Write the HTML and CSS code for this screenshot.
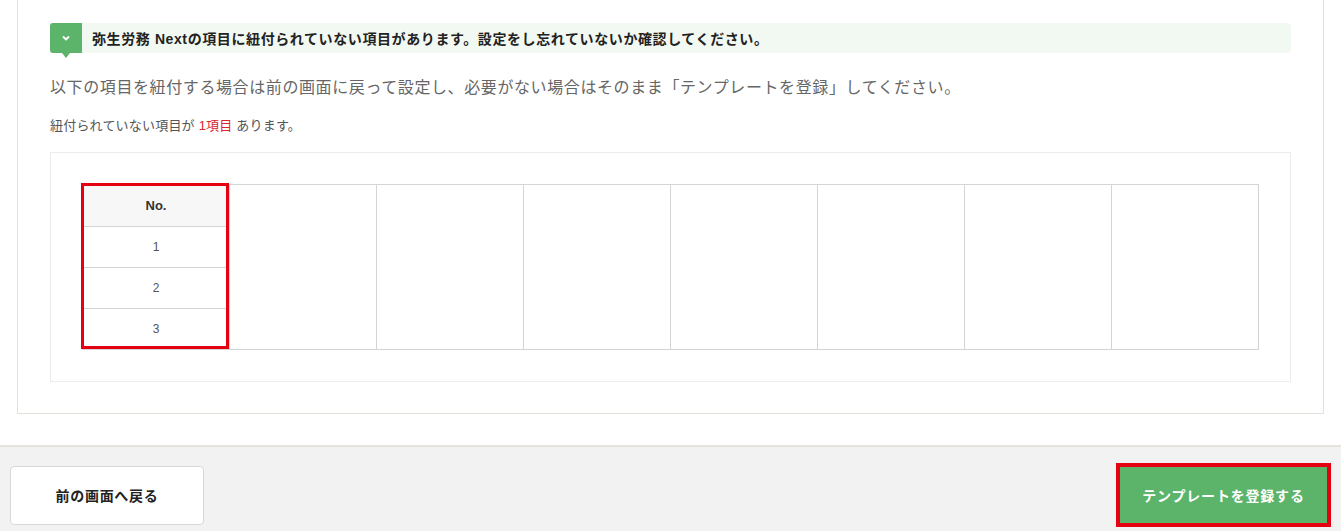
FILE: index.html
```html
<!DOCTYPE html>
<html lang="ja">
<head>
    <meta charset="UTF-8">
    <title>テンプレート登録</title>
    <link rel="stylesheet" href="styles.css">
</head>
<body>

<div class="panel">
    <div class="notice">
        <div class="notice-badge">
            <svg width="10" height="7" viewBox="0 0 10 7"><path d="M2 1.5 L5 4.5 L8 1.5" fill="none" stroke="#fff" stroke-width="1.8"/></svg>
        </div>
        <p class="notice-text">弥生労務 Nextの項目に紐付られていない項目があります。設定をし忘れていないか確認してください。</p>
    </div>

    <p class="lead">以下の項目を紐付する場合は前の画面に戻って設定し、必要がない場合はそのまま「テンプレートを登録」してください。</p>
    <p class="count">紐付られていない項目が <span class="count-num">1項目</span> あります。</p>

    <div class="table-box">
        <div class="table-wrap">
            <table class="items">
                <tr>
                    <th>No.</th>
                    <td class="blank" rowspan="4"></td>
                    <td class="blank" rowspan="4"></td>
                    <td class="blank" rowspan="4"></td>
                    <td class="blank" rowspan="4"></td>
                    <td class="blank" rowspan="4"></td>
                    <td class="blank" rowspan="4"></td>
                    <td class="blank" rowspan="4"></td>
                </tr>
                <tr><td>1</td></tr>
                <tr><td>2</td></tr>
                <tr><td>3</td></tr>
            </table>
            <div class="mark mark-col"></div>
        </div>
    </div>
</div>

<div class="footer">
    <button class="btn-back">前の画面へ戻る</button>
    <div class="mark-btn">
        <button class="btn-submit">テンプレートを登録する</button>
    </div>
</div>

</body>
</html>
```

FILE: styles.css
```css
body {
    margin: 0;
    background-color: #fff;
    font-family: "Liberation Sans", "Noto Sans CJK JP", sans-serif;
    color: #333;
}
p {
    margin: 0;
}
.panel {
    margin: 0 17px 31px;
    padding: 23px 32px 31px;
    border: 1px solid #e4e0da;
    border-top: none;
}
.notice {
    display: flex;
    align-items: center;
    height: 30px;
    background-color: #f2f9f2;
    border-radius: 4px;
}
.notice-badge {
    position: relative;
    width: 32px;
    height: 30px;
    background-color: #5cb46a;
    border-radius: 3px 0 0 3px;
    display: flex;
    align-items: center;
    justify-content: center;
}
.notice-badge::after {
    content: "";
    position: absolute;
    left: 12px;
    bottom: -5px;
    border-left: 4px solid transparent;
    border-right: 4px solid transparent;
    border-top: 5px solid #5cb46a;
}
.notice-text {
    margin-left: 10px;
    font-size: 14px;
    letter-spacing: 0.6px;
    font-weight: bold;
    color: #222;
}
.lead {
    margin-top: 24px;
    font-size: 16px;
    letter-spacing: 0.6px;
    color: #666;
    line-height: 22px;
}
.count {
    margin-top: 19px;
    font-size: 13px;
    letter-spacing: 0.2px;
    color: #555;
    line-height: 16px;
}
.count-num {
    color: #d9262c;
}
.table-box {
    margin-top: 18px;
    padding: 31px;
    border: 1px solid #ececec;
}
.table-wrap {
    position: relative;
}
.items {
    width: 100%;
    border-collapse: collapse;
    table-layout: fixed;
    font-size: 12px;
    color: #555;
}
.items th, .items td {
    border: 1px solid #d4d4d4;
    text-align: center;
    padding: 0;
    height: 40px;
}
.items th {
    height: 41px;
    background-color: #f7f7f7;
    font-weight: bold;
    font-size: 13px;
    color: #333;
}
.items td.blank {
    height: auto;
}
.mark {
    position: absolute;
    border: 3px solid #e50012;
}
.mark-col {
    left: -1px;
    top: -1px;
    width: 142px;
    height: 160px;
}
.footer {
    display: flex;
    justify-content: space-between;
    align-items: center;
    height: 72px;
    padding: 12px 10px 0;
    background-color: #f2f2f2;
    border-top: 2px solid #e6e3de;
}
.btn-back {
    width: 194px;
    height: 59px;
    background-color: #fff;
    border: 1px solid #d8d8d8;
    border-radius: 4px;
    font-family: inherit;
    font-size: 14px;
    letter-spacing: 0.7px;
    font-weight: bold;
    color: #222;
    cursor: pointer;
}
.mark-btn {
    border: 4px solid #e50012;
}
.btn-submit {
    display: block;
    width: 207px;
    height: 56px;
    background-color: #5cb46a;
    border: none;
    font-family: inherit;
    font-size: 14px;
    letter-spacing: 0.8px;
    font-weight: bold;
    color: #fff;
    cursor: pointer;
}
```
